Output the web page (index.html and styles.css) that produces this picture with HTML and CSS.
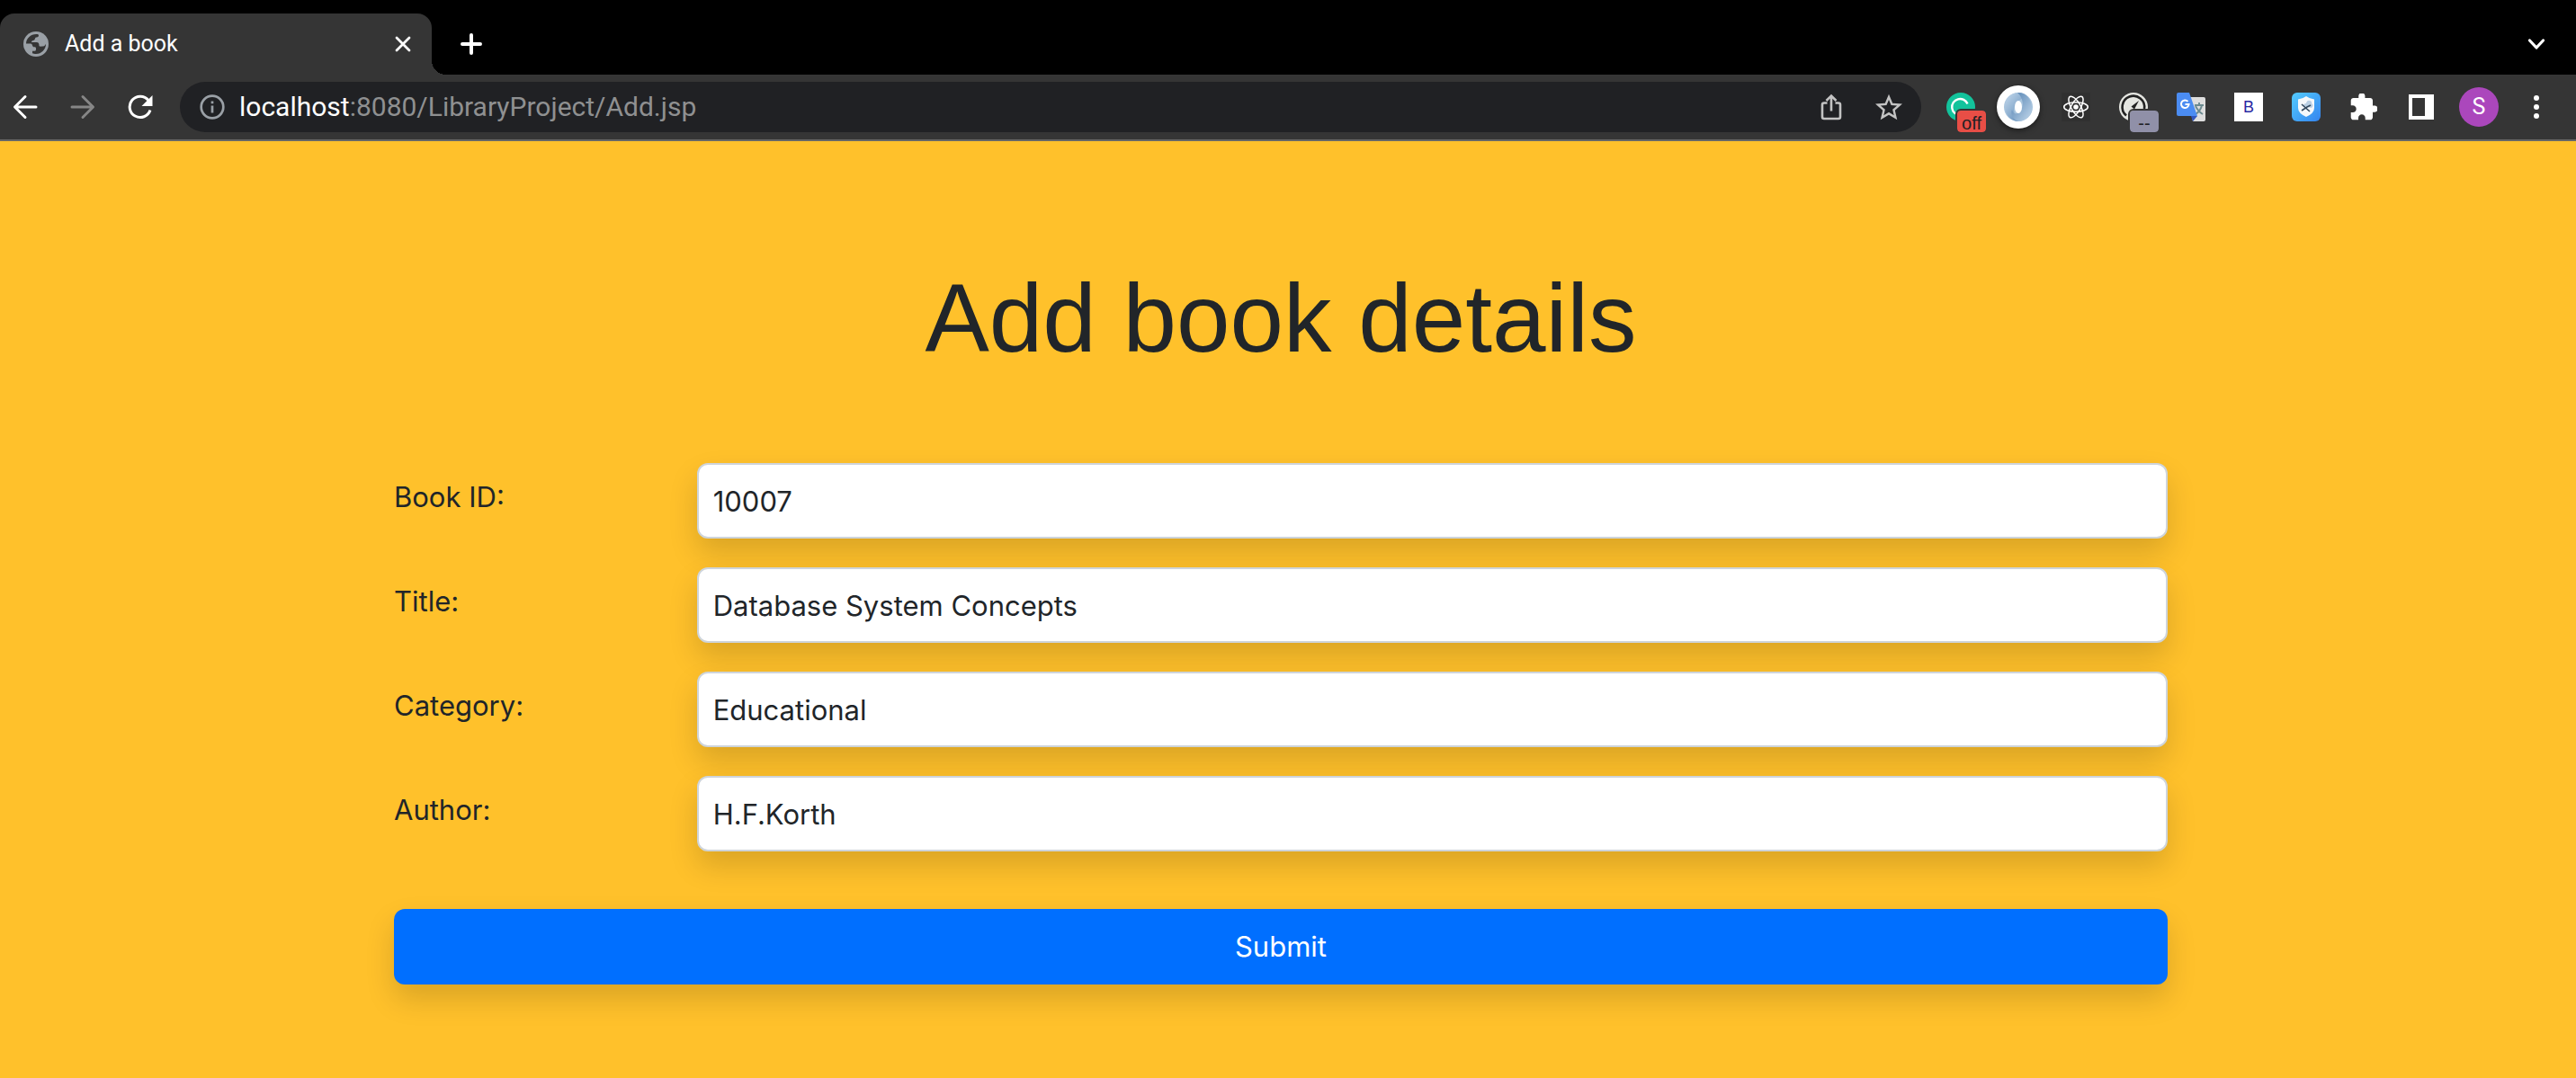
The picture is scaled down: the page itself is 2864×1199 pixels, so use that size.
FILE: index.html
```html
<!DOCTYPE html>
<html lang="en">
<head>
<meta charset="utf-8">
<title>Add a book</title>
<link rel="stylesheet" href="styles.css">
</head>
<body>
<header class="browser">
  <div class="tabstrip">
    <div class="tab">
      <svg class="favicon" width="28" height="28" viewBox="0 0 28 28"><circle cx="14" cy="14" r="14" fill="#9aa0a6"/><path fill="#353535" d="M3 13.500C3 8 8 3 14.500 3 16 3 17 3.300 17 4.500 17 6 15.500 6.500 14 6.500c-1 0-1 3.500-3 3.500-1.500 0-2 1-2 2h5.500c2.500 0 3 1.500 3 4 0 1 3 .5 4.500.5s2-1.500 3-2.500c0 6-5 11-11 11-1.500 0-3-.300-4-.700v-2.500h2.500c1.500 0 1.500-1 1.500-3 0-1.500-1-1.500-2-1.500-2.500 0-1.500-3.800-4-3.800z"/></svg>
      <span class="tab-title">Add a book</span>
      <button class="icon-button" aria-label="Close tab"><svg width="18" height="18" viewBox="0 0 18 18"><path d="M2 2 16 16M16 2 2 16" stroke="#fff" stroke-width="2.800" stroke-linecap="round"/></svg></button>
    </div>
    <button class="icon-button new-tab" aria-label="New tab"><svg width="24" height="24" viewBox="0 0 24 24"><path d="M12 2v20M2 12h20" stroke="#fff" stroke-width="4" stroke-linecap="round"/></svg></button>
    <button class="icon-button tab-search" aria-label="Search tabs"><svg width="20" height="14" viewBox="0 0 20 14"><path d="m2.500 3 7.500 8 7.500-8" fill="none" stroke="#fff" stroke-width="3.200" stroke-linecap="round" stroke-linejoin="round"/></svg></button>
  </div>

  <div class="toolbar">
    <nav class="history">
      <button class="icon-button" aria-label="Back"><svg width="28" height="28" viewBox="0 0 28 28"><path d="M26 14H3M14 2.500 2.500 14 14 25.500" fill="none" stroke="#fff" stroke-width="3" stroke-linecap="round" stroke-linejoin="round"/></svg></button>
      <button class="icon-button" aria-label="Forward"><svg width="28" height="28" viewBox="0 0 28 28"><path d="M2 14h23M14 2.500 25.500 14 14 25.500" fill="none" stroke="#868686" stroke-width="3" stroke-linecap="round" stroke-linejoin="round"/></svg></button>
      <button class="icon-button" aria-label="Reload"><svg width="28" height="28" viewBox="0 0 28 28"><path d="M25 17.500A11.700 11.700 0 1 1 23 6.500" fill="none" stroke="#fff" stroke-width="3"/><path d="M27.500 1v12h-12z" fill="#fff"/></svg></button>
    </nav>

    <div class="omnibox">
      <svg width="28" height="28" viewBox="0 0 28 28"><circle cx="14" cy="14" r="12.300" fill="none" stroke="#9aa0a6" stroke-width="2.700"/><path d="M14 12.500v8M14 7.500v2.800" stroke="#9aa0a6" stroke-width="2.700"/></svg>
      <p class="url"><span class="host">localhost</span>:8080/LibraryProject/Add.jsp</p>
      <button class="icon-button" aria-label="Share"><svg width="24" height="30" viewBox="0 0 24 30"><path d="M7.500 10.500H4q-2 0-2 2V26q0 2 2 2h16q2 0 2-2V12.500q0-2-2-2h-3.500M12 19.500V3M6.500 8 12 2.500 17.500 8" fill="none" stroke="#c3c3c3" stroke-width="2.600"/></svg></button>
      <button class="icon-button" aria-label="Bookmark this page"><svg width="30" height="30" viewBox="2 1.500 20 20"><path fill="#c3c3c3" d="m22 9.240-7.190-.62L12 2 9.190 8.630 2 9.240l5.460 4.730L5.820 21 12 17.270 18.180 21l-1.630-7.030L22 9.240zM12 15.400l-3.760 2.270 1-4.280-3.320-2.880 4.380-.38L12 6.100l1.710 4.040 4.380.38-3.320 2.880 1 4.280L12 15.400z"/></svg></button>
    </div>

    <div class="extensions">
      <button class="icon-button" aria-label="Grammar checker"><svg width="32" height="32" viewBox="0 0 32 32"><circle cx="16" cy="16" r="16" fill="#13c39c"/><path d="M23.500 12.500A9 9 0 1 0 15 25" fill="none" stroke="#fff" stroke-width="2.400"/></svg><span class="badge">off</span></button>
      <button class="icon-button" aria-label="JSON formatter"><span class="disc"><svg width="32" height="32" viewBox="0 0 32 32">
        <defs><linearGradient id="ringA" x1="0" y1="0" x2="1" y2="1"><stop offset="0" stop-color="#c5daed"/><stop offset="1" stop-color="#4f7fb0"/></linearGradient><linearGradient id="ringB" x1="0" y1="0" x2="1" y2="1"><stop offset="0" stop-color="#4f7fb0"/><stop offset="1" stop-color="#c3d8eb"/></linearGradient></defs>
        <circle cx="16" cy="16" r="16" fill="#a9c5de"/>
        <path fill="url(#ringA)" d="M16 10C8 15 11 27 17 32 4 32-2 19 3 8 6 2 12 0 17 0c6 0 10 4 10 9-3-3-8-3-11 1z"/><path fill="url(#ringB)" d="M16 22c8-5 5-17-1-22 13 0 19 13 14 24-3 6-9 8-13 8-6-2-9-8-7-13 1 4 4 6 7 3z"/><ellipse cx="16" cy="16" rx="4" ry="7" fill="#fff"/></svg></span></button>
      <button class="icon-button" aria-label="React developer tools"><svg width="32" height="32" viewBox="0 0 32 32"><path fill="#303030" d="M0 0h32v32H0z"/><g fill="none" stroke="#fff" stroke-width="1.500"><ellipse cx="16" cy="16" rx="13.300" ry="5.200"/><ellipse cx="16" cy="16" rx="13.300" ry="5.200" transform="rotate(60 16 16)"/><ellipse cx="16" cy="16" rx="13.300" ry="5.200" transform="rotate(120 16 16)"/></g><circle cx="16" cy="16" r="2.800" fill="#fff"/></svg></button>
      <button class="icon-button" aria-label="Page speed"><svg width="32" height="32" viewBox="0 0 32 32"><circle cx="16" cy="16" r="16" fill="#e5e6e1"/><path d="M8 25.500A12.300 12.300 0 1 1 28 18" fill="none" stroke="#222" stroke-width="2.600"/><path d="m22 9-8.500 6.500 3.500 3z" fill="#222"/></svg><span class="badge badge-muted">--</span></button>
      <button class="icon-button" aria-label="Translate"><svg width="32" height="32" viewBox="0 0 32 32"><path fill="#dedede" d="M13 5h17q2 0 2 2v23q0 2-2 2H18z"/><path d="M20 14h10M25 11v3M28 14q-1 6-7 10M21 15q3 6 8 9" fill="none" stroke="#6c8b90" stroke-width="1.900"/><path fill="#3256bd" d="M16 26h7l-5 6z"/><path fill="#4b8cf2" d="M2 0h12l9 26H2q-2 0-2-2V2q0-2 2-2z"/><path d="M12.500 9.800A4.300 4.300 0 1 0 13.600 13H9.500" fill="none" stroke="#fff" stroke-width="2"/></svg></button>
      <button class="icon-button" aria-label="B extension"><span class="letter-tile">B</span></button>
      <button class="icon-button" aria-label="Privacy shield"><svg width="32" height="32" viewBox="0 0 32 32"><defs><linearGradient id="sky" x1="0" y1="0" x2="1" y2="1"><stop offset="0" stop-color="#53cbff"/><stop offset="1" stop-color="#3484ee"/></linearGradient></defs><rect width="32" height="32" rx="6" fill="url(#sky)"/><path fill="#f5f8fb" d="M16 4q4 3 9 3.500V17q0 6-9 10-9-4-9-10V7.500Q12 7 16 4z"/><path fill="#b9cfe4" d="M13 15q0-3 3-3 1-4 4-3 3 1 2 3 3 2 0 5z"/><path d="m11 13 9 8M21 14l-4 2-6 4" fill="none" stroke="#344a5f" stroke-width="1.600"/></svg></button>
      <button class="icon-button" aria-label="Extensions"><svg width="30" height="30" viewBox="1.500 1.500 21 21"><path fill="#fff" d="M20.500 11H19V7c0-1.100-.9-2-2-2h-4V3.500C13 2.120 11.880 1 10.500 1S8 2.120 8 3.500V5H4c-1.100 0-1.990.9-1.990 2v3.800H3.500c1.490 0 2.700 1.210 2.700 2.700s-1.210 2.700-2.700 2.700H2V20c0 1.100.9 2 2 2h3.800v-1.500c0-1.490 1.210-2.700 2.700-2.700 1.490 0 2.700 1.210 2.700 2.700V22H17c1.100 0 2-.9 2-2v-4h1.500c1.380 0 2.500-1.120 2.500-2.500S21.880 11 20.500 11z"/></svg></button>
      <button class="icon-button" aria-label="Side panel"><svg width="28" height="28" viewBox="0 0 28 28"><path fill="#fff" fill-rule="evenodd" d="M0 0h28v28H0zM4 4v20h14V4z"/></svg></button>
      <button class="icon-button" aria-label="Profile"><span class="avatar">S</span></button>
      <button class="icon-button" aria-label="Menu"><svg width="6" height="26" viewBox="0 0 6 26"><g fill="#fff"><circle cx="3" cy="3" r="3"/><circle cx="3" cy="13" r="3"/><circle cx="3" cy="23" r="3"/></g></svg></button>
    </div>
  </div>
</header>

<main class="page">
  <h1 class="page-title">Add book details</h1>
  <form class="book-form">
    <div class="row"><label for="book-id">Book ID:</label><input id="book-id" type="text" value="10007"></div>
    <div class="row"><label for="title">Title:</label><input id="title" type="text" value="Database System Concepts"></div>
    <div class="row"><label for="category">Category:</label><input id="category" type="text" value="Educational"></div>
    <div class="row"><label for="author">Author:</label><input id="author" type="text" value="H.F.Korth"></div>
    <button class="submit" type="submit">Submit</button>
  </form>
</main>
</body>
</html>
```
FILE: styles.css
```css
* {
  box-sizing: border-box;
}

body {
  display: flex;
  flex-direction: column;
  min-height: 100vh;
  margin: 0;
  background: #ffc12b;
  color: #212529;
  font-family: Inter, "Liberation Sans", sans-serif;
  font-size: 31px;
  line-height: 48px;
}

svg {
  display: block;
  flex: none;
}

button,
input {
  font: inherit;
}

.icon-button {
  position: relative;
  display: flex;
  align-items: center;
  justify-content: center;
  flex: none;
  padding: 0;
  border: 0;
  background: none;
}

/* Browser window frame */
.browser {
  background: #000;
  border-bottom: 2px solid #666;
  font-family: Roboto, "Liberation Sans", sans-serif;
}

.tabstrip {
  display: flex;
  align-items: stretch;
  padding-top: 15px;
  padding-right: 34px;
}

.tab {
  position: relative;
  display: flex;
  align-items: center;
  width: 480px;
  height: 68px;
  padding: 0 23px 0 26px;
  border-radius: 16px 16px 0 0;
  background: #353535;
}

.tab::after {
  content: "";
  position: absolute;
  left: 100%;
  bottom: 0;
  width: 16px;
  height: 16px;
  background: radial-gradient(circle at 100% 0, transparent 16px, #353535 16px);
}

.tab-title {
  flex: 1;
  margin-left: 18px;
  color: #fff;
  font-size: 25px;
}

.new-tab {
  margin-left: 32px;
}

.tab-search {
  margin-left: auto;
}

.toolbar {
  display: flex;
  align-items: center;
  height: 72px;
  padding-right: 12px;
  background: #353535;
}

.history {
  display: flex;
  gap: 8px;
  margin-right: 16px;
}

.history .icon-button {
  width: 56px;
}

.omnibox {
  display: flex;
  align-items: center;
  flex: 1;
  height: 56px;
  margin-right: 12px;
  padding: 0 20px 0 22px;
  border-radius: 28px;
  background: #202124;
}

.omnibox .icon-button {
  width: 32px;
  margin-left: 32px;
}

.url {
  flex: 1;
  margin: 0 0 0 16px;
  color: #8f9091;
  font-size: 30px;
}

.host {
  color: #fff;
}

.extensions {
  display: flex;
}

.extensions .icon-button {
  width: 64px;
  height: 56px;
}

.badge {
  position: absolute;
  left: 28px;
  bottom: 0;
  width: 32px;
  height: 24px;
  border-radius: 4px;
  outline: 2px solid #353535;
  background: #e84e46;
  color: #202124;
  font-family: "Liberation Sans", sans-serif;
  font-size: 20px;
  line-height: 28px;
  text-align: center;
}

.badge-muted {
  background: #9090a8;
}

.disc {
  display: flex;
  padding: 8px;
  border-radius: 50%;
  background: #fff;
  box-shadow: 0 2px 6px rgba(0, 0, 0, 0.5);
}

.letter-tile {
  width: 32px;
  background: #fff;
  color: #2929a3;
  font-family: "Liberation Sans", sans-serif;
  font-size: 18px;
  line-height: 32px;
}

.avatar {
  width: 44px;
  border-radius: 50%;
  background: #ab47bc;
  color: #fff;
  font-size: 25px;
  line-height: 44px;
}

/* Book form */
.page {
  flex: 1;
  padding: 130px 454px 96px 438px;
}

.page-title {
  margin: 0 0 94px;
  font-family: "Liberation Sans", sans-serif;
  font-size: 107px;
  font-weight: 400;
  line-height: 134px;
  text-align: center;
}

.book-form {
  display: grid;
  gap: 32px;
}

.row {
  display: grid;
  grid-template-columns: repeat(12, 1fr);
  column-gap: 48px;
}

.row label {
  grid-column: span 2;
  padding-top: 14px;
}

.row input {
  grid-column: span 10;
  min-width: 0;
  height: 84px;
  padding: 16px;
  border: 2px solid #ced4da;
  border-radius: 12px;
  background: #fff;
  color: #212529;
  box-shadow: 0 16px 32px rgba(0, 0, 0, 0.15);
}

.submit {
  height: 84px;
  margin-top: 32px;
  border: 0;
  border-radius: 12px;
  background: #006fff;
  color: #fff;
  box-shadow: 0 16px 32px rgba(0, 0, 0, 0.15);
}
```
